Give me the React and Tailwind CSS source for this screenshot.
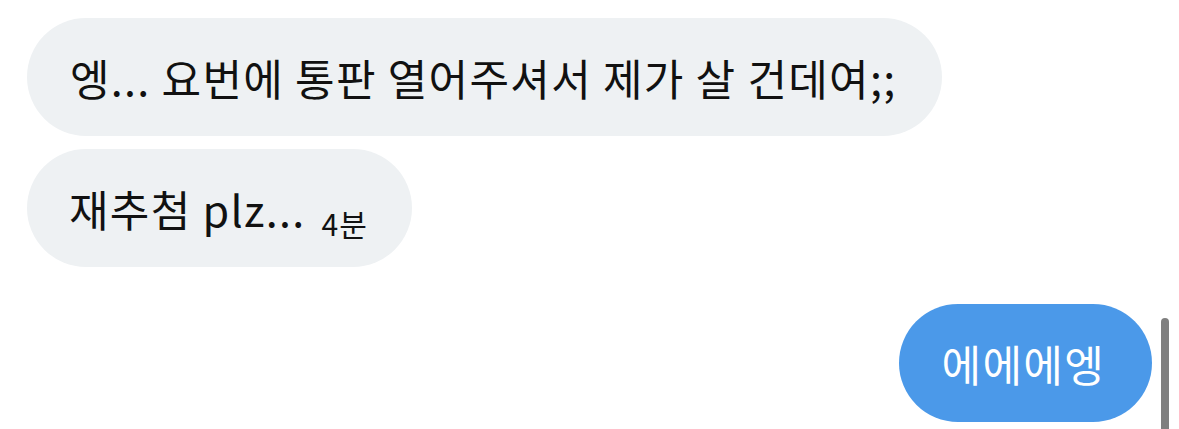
export default function App() {
  const font = { fontFamily: '"Noto Sans CJK KR", "Noto Sans", sans-serif' }
  return (
    <div className="w-[1179px] h-[429px] bg-white overflow-hidden relative" style={font}>
      <div className="flex flex-col items-start pl-[27px] pr-[27px] pt-[18px]">
        <div className="h-[118px] flex items-center pl-[43px] pr-[46px] rounded-full bg-[#eef1f3] text-[43px] tracking-[1.3px] text-[#111] whitespace-nowrap">
          엥... 요번에 통판 열어주셔서 제가 살 건데여;;
        </div>
        <div className="mt-[13px] h-[118px] flex items-center pl-[42px] pr-[44px] rounded-full bg-[#eef1f3] text-[#111] whitespace-nowrap">
          <span className="text-[43px] tracking-[1.3px]">재추첨 plz...</span>
          <span className="ml-[16px] mt-[30px] text-[30px] tracking-[1px]">4분</span>
        </div>
        <div className="self-end mt-[37px] h-[118px] flex items-center pl-[43px] pr-[47px] rounded-full bg-[#4b99e9] text-white text-[43px] tracking-[1.3px] whitespace-nowrap">
          에에에엥
        </div>
      </div>
      <div className="absolute left-[1161px] top-[318px] w-[8px] h-[120px] rounded-t-full bg-[#7f7f7f]" />
    </div>
  )
}
